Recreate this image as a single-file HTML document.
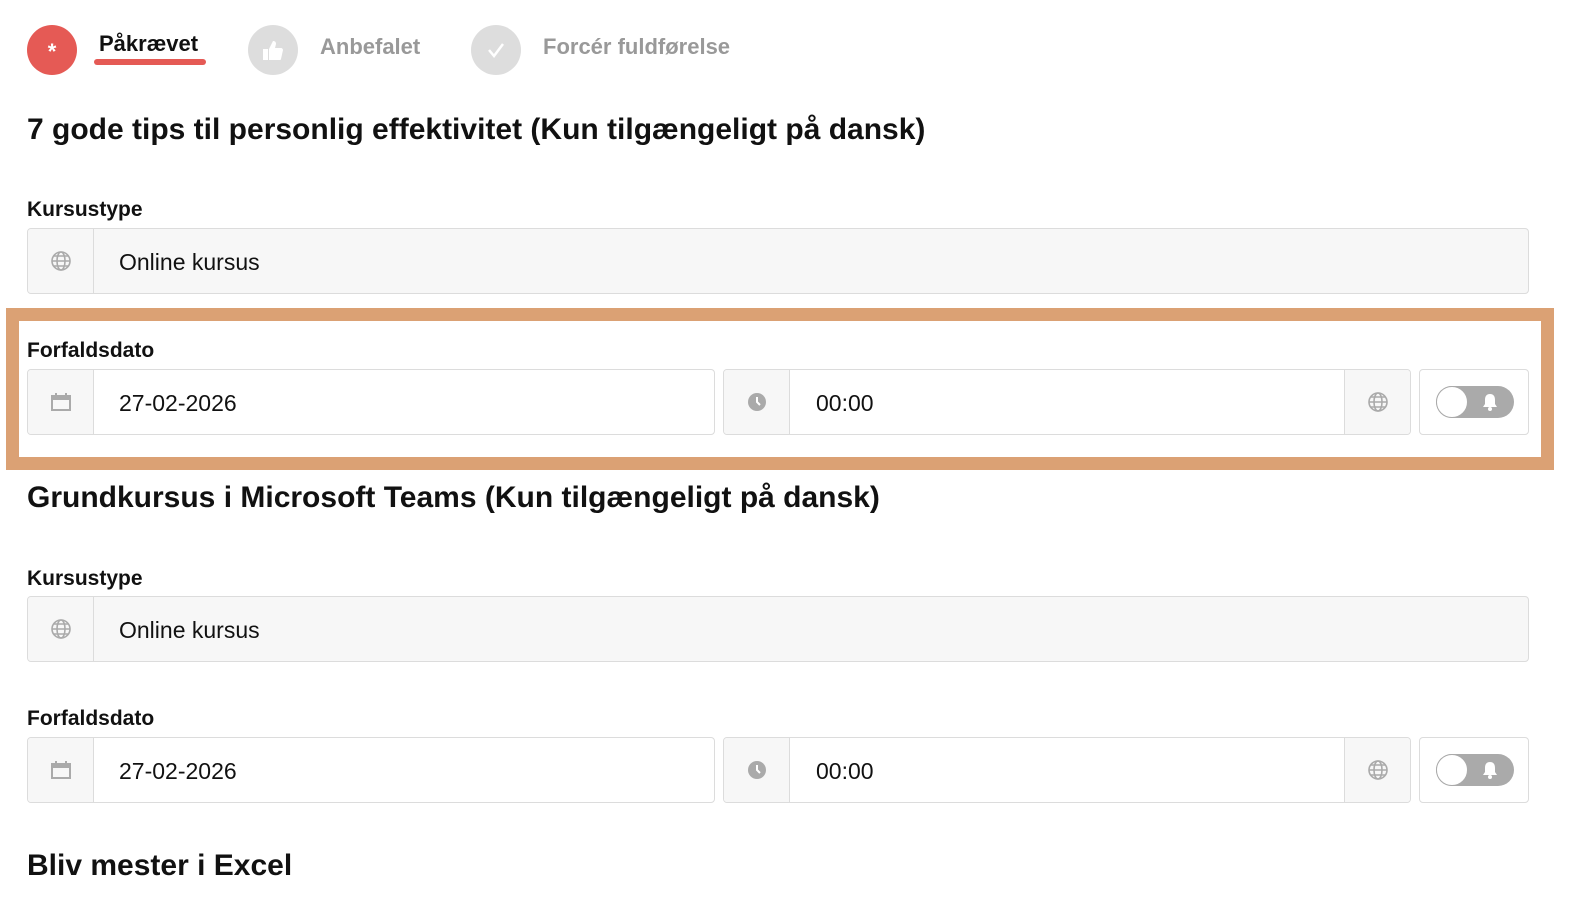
<!DOCTYPE html>
<html><head><meta charset="utf-8"><style>
body{margin:0;width:1592px;height:924px;background:#fff;font-family:"Liberation Sans",sans-serif;position:relative;overflow:hidden;color:#111}
.a{position:absolute}
.circ{position:absolute;width:50px;height:50px;border-radius:50%;top:25px}
.tab{position:absolute;top:34px;font-size:22px;font-weight:bold;color:#999}
h2{position:absolute;margin:0;font-size:30px;font-weight:bold;left:27px;color:#111}
.lbl{position:absolute;left:27px;font-size:21px;font-weight:bold;color:#111}
.box{position:absolute;height:64px;border:1px solid #dcdcdc;border-radius:4px;background:#fff;overflow:hidden}
.ic{position:absolute;left:0;top:0;width:65px;height:64px;background:#f7f7f7;border-right:1px solid #dcdcdc;display:flex;align-items:center;justify-content:center}
.val{position:absolute;top:20px;font-size:23px;color:#111}
.gray{background:#f7f7f7}
.tog{position:absolute;left:16px;top:16px;width:78px;height:32px;border-radius:16px;background:#aaa}
.tog:before{content:"";position:absolute;left:0;top:0;width:30px;height:30px;border-radius:50%;background:#fff;border:1px solid #aaa}
</style></head><body>
<div class="circ" style="left:27px;background:#e55a55;color:#fff;font-size:22px;font-weight:bold;text-align:center;line-height:54px">*</div>
<div class="tab" style="left:99px;top:31px;color:#111">Påkrævet</div>
<div class="a" style="left:94px;top:59px;width:112px;height:6px;border-radius:3px;background:#e55a55"></div>
<div class="circ" style="left:248px;background:#ddd"><svg width="50" height="50"><rect x="15" y="24" width="5" height="11" fill="#fff"/><path d="M21 24l4-8c2 0 3 1 3 3l-1 4h6c1 0 2 1 2 2l-2 9c0 1-1 1-2 1h-10z" fill="#fff"/></svg></div>
<div class="tab" style="left:320px">Anbefalet</div>
<div class="circ" style="left:471px;background:#ddd"><svg width="50" height="50"><path d="M18 25l5 6 9-12" stroke="#fff" stroke-width="2.5" fill="none"/></svg></div>
<div class="tab" style="left:543px">Forcér fuldførelse</div>

<h2 style="top:113px">7 gode tips til personlig effektivitet (Kun tilgængeligt på dansk)</h2>
<div class="lbl" style="top:198px">Kursustype</div>
<div class="box gray" style="left:27px;top:228px;width:1500px"><div class="ic"><svg width="22" height="22" viewBox="0 0 22 22" fill="none" stroke="#aaa" stroke-width="1.6"><circle cx="11" cy="11" r="9"/><ellipse cx="11" cy="11" rx="4" ry="9"/><path d="M2 11h18M4 6h14M4 16h14"/></svg></div><div class="val" style="left:91px">Online kursus</div></div>

<div class="a" style="left:6px;top:308px;width:1522px;height:136px;border:13px solid #dba174"></div>
<div class="lbl" style="top:339px">Forfaldsdato</div>
<div class="box" style="left:27px;top:369px;width:686px"><div class="ic"><svg width="22" height="20"><rect x="2" y="4" width="18" height="14" fill="none" stroke="#aaa" stroke-width="2"/><rect x="2" y="4" width="18" height="4" fill="#aaa"/><path d="M6 1v4M16 1v4" stroke="#aaa" stroke-width="2"/></svg></div><div class="val" style="left:91px">27-02-2026</div></div>
<div class="box" style="left:723px;top:369px;width:686px"><div class="ic"><svg width="20" height="20"><circle cx="10" cy="10" r="9" fill="#aaa"/><path d="M10 5v5l3 3" stroke="#fff" stroke-width="2" fill="none"/></svg></div><div class="val" style="left:92px">00:00</div><div class="ic" style="left:620px;border-right:0;border-left:1px solid #dcdcdc"><svg width="22" height="22" viewBox="0 0 22 22" fill="none" stroke="#aaa" stroke-width="1.6"><circle cx="11" cy="11" r="9"/><ellipse cx="11" cy="11" rx="4" ry="9"/><path d="M2 11h18M4 6h14M4 16h14"/></svg></div></div>
<div class="box" style="left:1419px;top:369px;width:108px"><div class="tog"><svg class="a" style="left:44px;top:6px" width="20" height="20"><path d="M10 2c-4 0-5 3-5 6v4l-2 3h14l-2-3V8c0-3-1-6-5-6z" fill="#fff"/><circle cx="10" cy="17" r="2" fill="#fff"/></svg></div></div>

<h2 style="top:481px">Grundkursus i Microsoft Teams (Kun tilgængeligt på dansk)</h2>
<div class="lbl" style="top:567px">Kursustype</div>
<div class="box gray" style="left:27px;top:596px;width:1500px"><div class="ic"><svg width="22" height="22" viewBox="0 0 22 22" fill="none" stroke="#aaa" stroke-width="1.6"><circle cx="11" cy="11" r="9"/><ellipse cx="11" cy="11" rx="4" ry="9"/><path d="M2 11h18M4 6h14M4 16h14"/></svg></div><div class="val" style="left:91px">Online kursus</div></div>
<div class="lbl" style="top:707px">Forfaldsdato</div>
<div class="box" style="left:27px;top:737px;width:686px"><div class="ic"><svg width="22" height="20"><rect x="2" y="4" width="18" height="14" fill="none" stroke="#aaa" stroke-width="2"/><rect x="2" y="4" width="18" height="4" fill="#aaa"/><path d="M6 1v4M16 1v4" stroke="#aaa" stroke-width="2"/></svg></div><div class="val" style="left:91px">27-02-2026</div></div>
<div class="box" style="left:723px;top:737px;width:686px"><div class="ic"><svg width="20" height="20"><circle cx="10" cy="10" r="9" fill="#aaa"/><path d="M10 5v5l3 3" stroke="#fff" stroke-width="2" fill="none"/></svg></div><div class="val" style="left:92px">00:00</div><div class="ic" style="left:620px;border-right:0;border-left:1px solid #dcdcdc"><svg width="22" height="22" viewBox="0 0 22 22" fill="none" stroke="#aaa" stroke-width="1.6"><circle cx="11" cy="11" r="9"/><ellipse cx="11" cy="11" rx="4" ry="9"/><path d="M2 11h18M4 6h14M4 16h14"/></svg></div></div>
<div class="box" style="left:1419px;top:737px;width:108px"><div class="tog"><svg class="a" style="left:44px;top:6px" width="20" height="20"><path d="M10 2c-4 0-5 3-5 6v4l-2 3h14l-2-3V8c0-3-1-6-5-6z" fill="#fff"/><circle cx="10" cy="17" r="2" fill="#fff"/></svg></div></div>

<h2 style="top:849px">Bliv mester i Excel</h2>
</body></html>
